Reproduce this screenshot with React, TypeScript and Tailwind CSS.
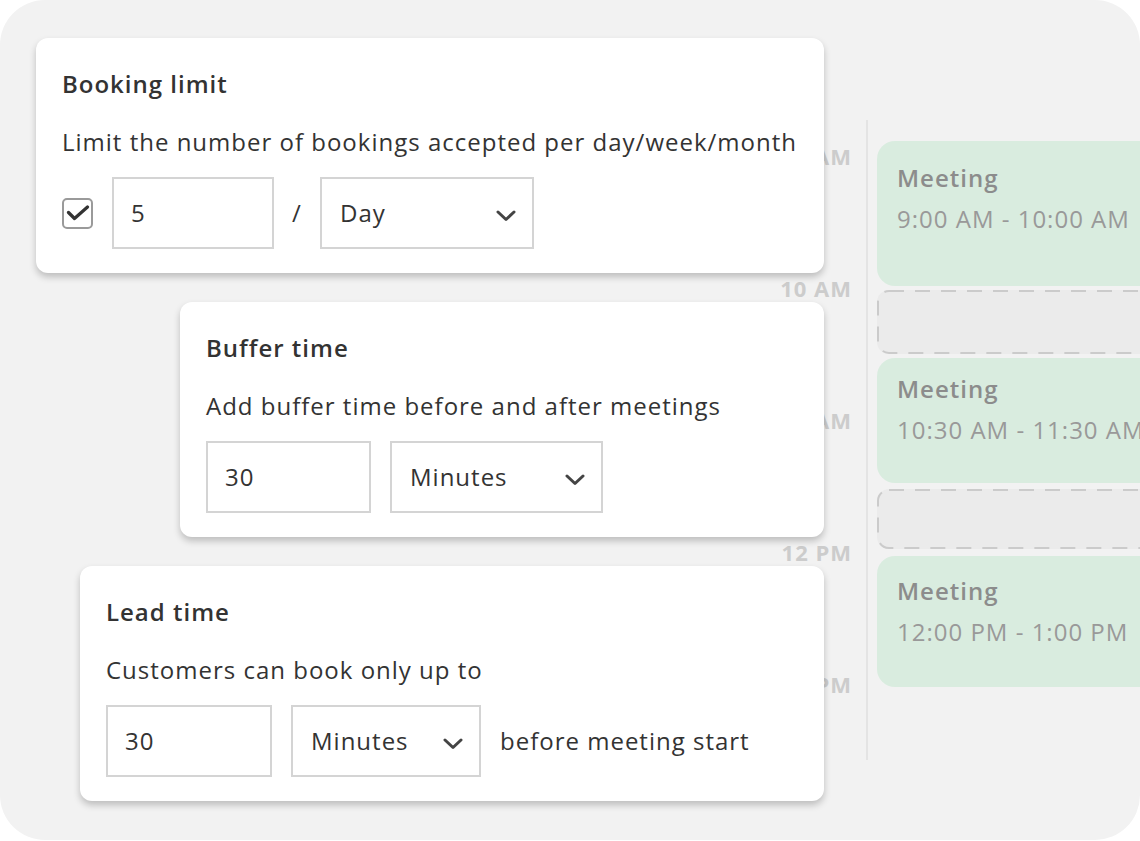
import React from "react";

const font = { fontFamily: '"Open Sans", "Liberation Sans", sans-serif' };

function Chevron() {
  return (
    <svg width="20" height="12" viewBox="0 0 20 12" fill="none" className="mt-[5px]">
      <polyline points="2,2 10,9.5 18,2" stroke="#444" strokeWidth="3" strokeLinecap="round" strokeLinejoin="round" />
    </svg>
  );
}

function Input({ value, w }: { value: string; w: string }) {
  return (
    <div className={`${w} h-[72px] border-2 border-[#d4d4d4] flex items-center pl-[17px] text-[24px] text-[#333] flex-none`}>
      {value}
    </div>
  );
}

function Select({ value, w }: { value: string; w: string }) {
  return (
    <div className={`${w} h-[72px] border-2 border-[#d4d4d4] flex items-center justify-between pl-[18px] pr-[16px] text-[24px] text-[#333] flex-none`}>
      <span>{value}</span>
      <Chevron />
    </div>
  );
}

function Card({ title, desc, children, cls }: { title: string; desc: string; children: React.ReactNode; cls: string }) {
  return (
    <div className={`${cls} h-[235px] bg-white rounded-[12px] shadow-[0_4px_7px_rgba(0,0,0,0.22)] pt-[30px] pl-[26px] pr-[20px]`}>
      <div className="text-[24px] leading-[32px] font-semibold text-[#333]">{title}</div>
      <div className="mt-[26px] text-[24px] leading-[32px] text-[#333] whitespace-nowrap">{desc}</div>
      <div className="mt-[19px] flex items-center">{children}</div>
    </div>
  );
}

function Meeting({ h, pt, time }: { h: string; pt: string; time: string }) {
  return (
    <div className={`${h} ${pt} w-[320px] bg-[#d9ecdf] rounded-l-[18px] pl-[20px]`}>
      <div className="text-[24px] leading-[32px] font-semibold text-[#8c8c8c]">Meeting</div>
      <div className="mt-[9px] text-[24px] leading-[32px] text-[#999] whitespace-nowrap">{time}</div>
    </div>
  );
}

function Slot({ h, mt }: { h: string; mt: string }) {
  return (
    <div className={`${h} ${mt} w-[320px] relative bg-[#ebebeb] rounded-l-[12px]`}>
      <svg className="absolute inset-0" width="320" height="100%" preserveAspectRatio="none">
        <rect x="1" y="1" width="340" height="calc(100% - 2px)" rx="11" ry="11" fill="none" stroke="#cbcbcb" strokeWidth="2" strokeDasharray="15 11" />
      </svg>
    </div>
  );
}

function Label({ text }: { text: string }) {
  return (
    <div className="h-[132px] flex items-center justify-end text-[22px] leading-none font-bold text-[#cccccc] whitespace-nowrap">
      {text}
    </div>
  );
}

export default function App() {
  return (
    <div className="w-[1140px] h-[841px] bg-white tracking-[1px]" style={font}>
      <div className="w-[1140px] h-[840px] rounded-[45px] bg-[#f2f2f2] overflow-hidden grid">
        {/* timeline layer */}
        <div className="col-start-1 row-start-1 flex pl-[752px]">
          <div className="w-[100px] mt-[90px] flex-none">
            <Label text="9 AM" />
            <Label text="10 AM" />
            <Label text="11 AM" />
            <Label text="12 PM" />
            <Label text="1 PM" />
          </div>
          <div className="ml-[14px] mt-[120px] w-[2px] h-[640px] bg-[#e4e4e4] flex-none" />
          <div className="ml-[9px] mt-[141px] flex flex-col flex-none">
            <Meeting h="h-[145px]" pt="pt-[21px]" time="9:00 AM - 10:00 AM" />
            <Slot h="h-[64px]" mt="mt-[4px]" />
            <Meeting h="h-[125px] mt-[4px]" pt="pt-[15px]" time="10:30 AM - 11:30 AM" />
            <Slot h="h-[60px]" mt="mt-[6px]" />
            <Meeting h="h-[131px] mt-[7px]" pt="pt-[19px]" time="12:00 PM - 1:00 PM" />
          </div>
        </div>

        {/* cards layer */}
        <div className="col-start-1 row-start-1 flex flex-col pt-[38px] gap-[29px]">
          <Card cls="ml-[36px] w-[788px]" title="Booking limit" desc="Limit the number of bookings accepted per day/week/month">
            <div className="w-[31px] h-[31px] rounded-[5px] border-2 border-[#9a9a9a] flex items-center justify-center mr-[19px] flex-none">
              <svg width="24" height="16" viewBox="0 0 24 16" fill="none">
                <polyline points="2.5,7.5 8.5,13.5 21.5,2" stroke="#333" strokeWidth="3.2" strokeLinecap="round" strokeLinejoin="round" />
              </svg>
            </div>
            <Input value="5" w="w-[162px]" />
            <div className="w-[46px] text-center text-[24px] text-[#333]">/</div>
            <Select value="Day" w="w-[214px]" />
          </Card>
          <Card cls="ml-[180px] w-[644px]" title="Buffer time" desc="Add buffer time before and after meetings">
            <Input value="30" w="w-[165px]" />
            <div className="w-[19px] flex-none" />
            <Select value="Minutes" w="w-[213px]" />
          </Card>
          <Card cls="ml-[80px] w-[744px]" title="Lead time" desc="Customers can book only up to">
            <Input value="30" w="w-[166px]" />
            <div className="w-[19px] flex-none" />
            <Select value="Minutes" w="w-[190px]" />
            <div className="ml-[19px] text-[24px] text-[#333] whitespace-nowrap">before meeting start</div>
          </Card>
        </div>
      </div>
    </div>
  );
}
